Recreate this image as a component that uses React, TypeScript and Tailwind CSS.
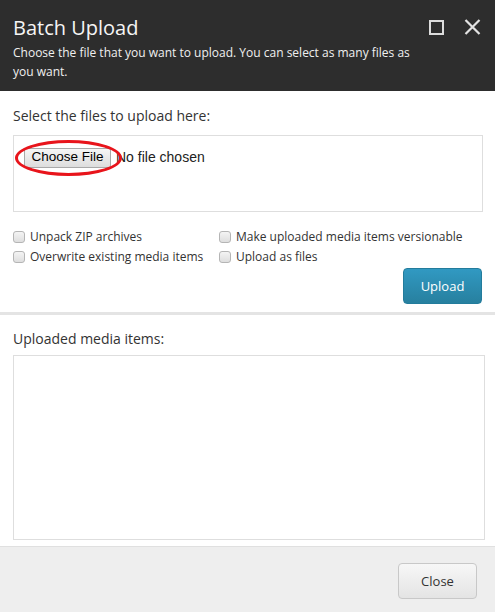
import React from "react"

function Box({ label }: { label: string }) {
  return (
    <label className="flex items-center gap-[5px] h-5 text-[12px] text-[#333]">
      <span className="w-[12px] h-[12px] rounded-[3px] border border-[#b5b5b5] bg-gradient-to-b from-[#f4f4f4] to-[#dedede]" />
      {label}
    </label>
  )
}

export default function App() {
  return (
    <div className="w-[495px] h-[612px] flex flex-col bg-white" style={{ fontFamily: "'Open Sans', sans-serif" }}>
      <div className="h-[91px] bg-[#2d2d2d] pl-[13px] pr-[14px] pt-[14px] text-white">
        <div className="flex items-start justify-between">
          <h1 className="text-[20px] leading-[28px] font-normal text-[#f5f5f5]">Batch Upload</h1>
          <div className="flex items-center gap-[20px] pt-[5px]">
            <span className="w-[15px] h-[15px] border-2 border-[#dcdcdc]" />
            <svg width="17" height="16" viewBox="0 0 17 16">
              <path d="M1.5 1 L15.5 15 M15.5 1 L1.5 15" stroke="#e2e2e2" strokeWidth="2.2" />
            </svg>
          </div>
        </div>
        <p className="mt-[1px] text-[12px] leading-[19px] text-[#f0f0f0] w-[410px]">
          Choose the file that you want to upload. You can select as many files as you want.
        </p>
      </div>

      <div className="px-[13px] pt-[15px] pb-[8px]">
        <p className="text-[14px] leading-5 text-[#333]">Select the files to upload here:</p>
        <div className="mt-[9px] mr-[-1px] h-[77px] border border-[#dedede] pt-[11px] pl-[10px]">
          <div className="relative flex items-center gap-[5px]" style={{ fontFamily: "'Liberation Sans', Arial, sans-serif" }}>
            <span className="h-5 w-[87px] flex items-center justify-center text-[13.5px] text-black border border-[#a9a9a9] rounded-[2px] bg-gradient-to-b from-[#f6f6f6] to-[#dddddd]">
              Choose File
            </span>
            <span className="text-[14px] text-[#222]">No file chosen</span>
            <span className="absolute left-[-9px] top-[-7px] w-[107px] h-[36px] rounded-[50%] border-[3px] border-[#e8141b]" />
          </div>
        </div>
        <div className="mt-[15px] grid grid-cols-[206px_1fr]">
          <Box label="Unpack ZIP archives" />
          <Box label="Make uploaded media items versionable" />
          <Box label="Overwrite existing media items" />
          <Box label="Upload as files" />
        </div>
        <div className="flex justify-end mt-px">
          <button className="w-[79px] h-[36px] pt-px rounded-[4px] border border-[#237c9c] bg-gradient-to-b from-[#3199c2] to-[#27809f] text-white text-[13px]">
            Upload
          </button>
        </div>
      </div>

      <div className="h-[3px] bg-[#e4e4e4]" />

      <div className="px-[13px] pt-[14px]">
        <p className="text-[14px] leading-5 text-[#333]">Uploaded media items:</p>
        <div className="mt-[6px] mr-[-3px] h-[185px] border border-[#dedede]" />
      </div>

      <div className="mt-auto h-[66px] bg-[#eeeeee] border-t border-[#e0e0e0] flex justify-end items-start pt-[16px] pr-[18px]">
        <button className="w-[79px] h-[36px] pt-px rounded-[4px] border border-[#c8c8c8] bg-gradient-to-b from-[#f7f7f7] to-[#e4e4e4] text-[13px] text-[#333]">
          Close
        </button>
      </div>
    </div>
  )
}
